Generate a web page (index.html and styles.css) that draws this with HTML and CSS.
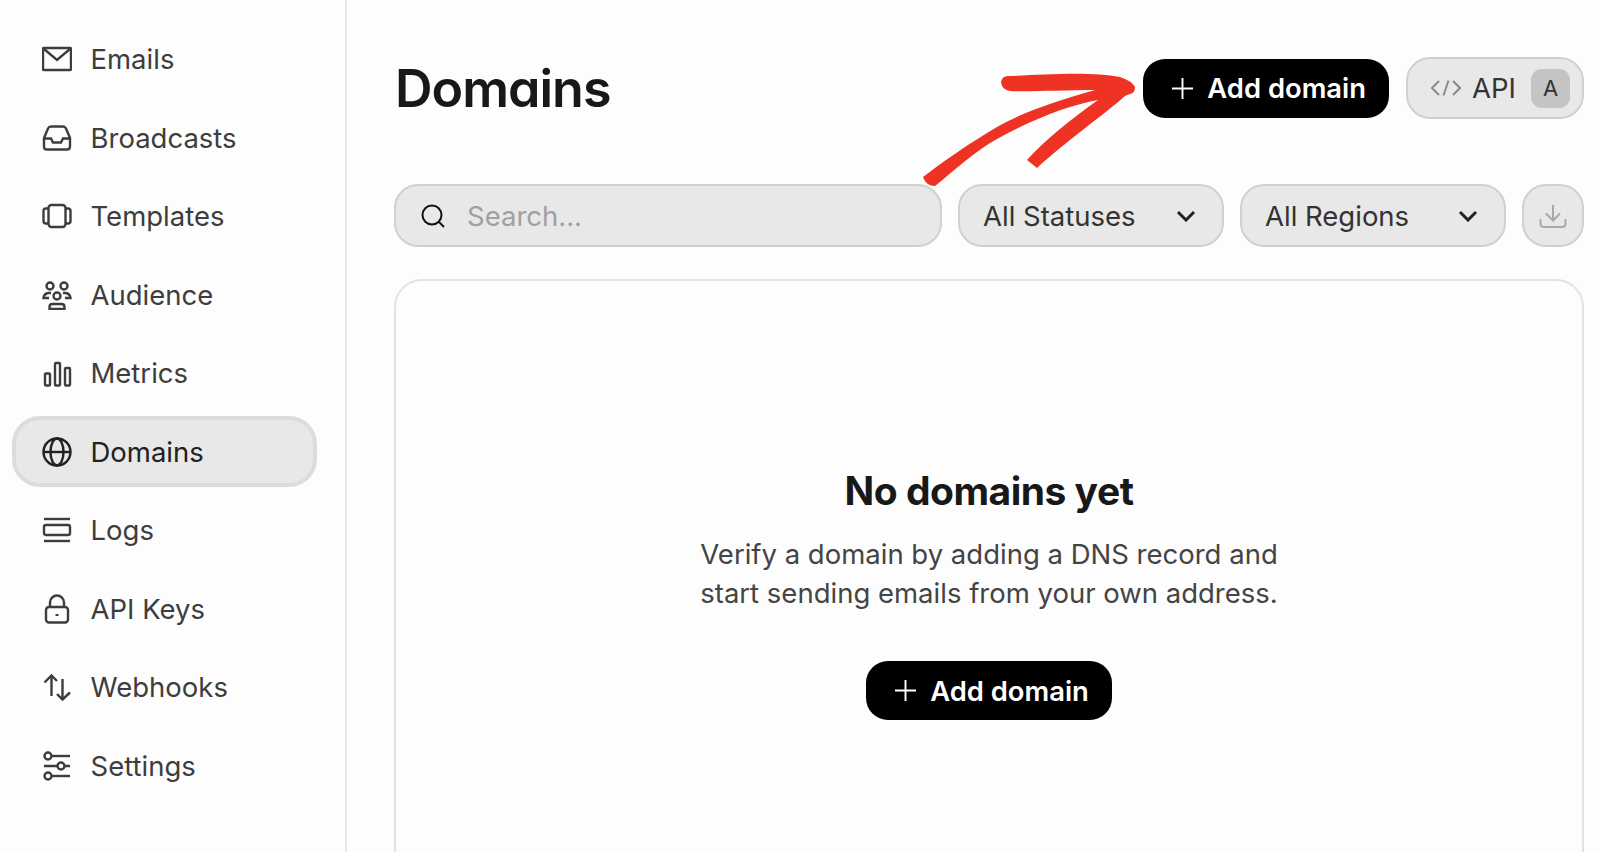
FILE: index.html
```html
<!DOCTYPE html>
<html lang="en">
  <head>
    <meta charset="UTF-8" />
    <title>Domains</title>
    <link rel="stylesheet" href="styles.css">
  </head>
  <body>
    <aside class="sidebar">
      <nav class="nav">
        <a class="nav-item" href="#emails">
          <svg class="nav-icon" viewBox="0 0 30 30"><rect x="1" y="4" width="28" height="22" rx="1"/><path d="M2 5l13 11L28 5"/></svg>
          Emails
        </a>
        <a class="nav-item" href="#broadcasts">
          <svg class="nav-icon" viewBox="0 0 30 30"><path d="M2 15L6 5.500Q7 3.500 9 3.500H21Q23 3.500 24 5.500L28 15V23.500Q28 26.500 25 26.500H5Q2 26.500 2 23.500Z"/><path d="M2 15.500H9L11 19.500H19L21 15.500H28"/></svg>
          Broadcasts
        </a>
        <a class="nav-item" href="#templates">
          <svg class="nav-icon" viewBox="0 0 30 30"><rect x="6.500" y="4" width="17" height="22" rx="3"/><path d="M6.500 7.500H4Q1.500 7.500 1.500 10V20Q1.500 22.500 4 22.500H6.500"/><path d="M23.500 7.500H26Q28.500 7.500 28.500 10V20Q28.500 22.500 26 22.500H23.500"/></svg>
          Templates
        </a>
        <a class="nav-item" href="#audience">
          <svg class="nav-icon" viewBox="0 0 30 30"><circle cx="8" cy="6" r="3.500"/><circle cx="22" cy="6" r="3.500"/><circle cx="15" cy="16" r="3.500"/><path d="M7.500 29V27Q7.500 24 10.500 24H19.500Q22.500 24 22.500 27V29Z"/><path d="M9 13H6.500Q2 13.500 1.500 18H7"/><path d="M21 13H23.500Q28 13.500 28.500 18H23"/></svg>
          Audience
        </a>
        <a class="nav-item" href="#metrics">
          <svg class="nav-icon" viewBox="0 0 30 30"><rect x="3" y="15.500" width="5" height="12" rx="1"/><rect x="13" y="5" width="5" height="22.500" rx="1"/><rect x="23" y="10" width="5" height="17.500" rx="1"/></svg>
          Metrics
        </a>
        <a class="nav-item nav-item-active" href="#domains">
          <svg class="nav-icon" viewBox="0 0 30 30"><circle cx="15" cy="15" r="13.500"/><ellipse cx="15" cy="15" rx="6.500" ry="13.500"/><path d="M1.500 15H28.500"/></svg>
          Domains
        </a>
        <a class="nav-item" href="#logs">
          <svg class="nav-icon" viewBox="0 0 30 30"><path d="M2 4H28"/><rect x="2" y="10" width="26" height="10" rx="2"/><path d="M2 26H28"/></svg>
          Logs
        </a>
        <a class="nav-item" href="#api-keys">
          <svg class="nav-icon" viewBox="0 0 30 30"><rect x="4" y="13" width="22" height="15.500" rx="3"/><path d="M8 13V8.500a7 7 0 0 1 14 0V13"/><path class="nav-icon-dot" d="M15 20v2"/></svg>
          API Keys
        </a>
        <a class="nav-item" href="#webhooks">
          <svg class="nav-icon" viewBox="0 0 30 30"><path d="M9.500 24V4M2.500 10.500L9.500 3.500L15 9"/><path d="M20.500 7V27M28 20.500L20.500 27.500L15 22"/></svg>
          Webhooks
        </a>
        <a class="nav-item" href="#settings">
          <svg class="nav-icon" viewBox="0 0 30 30"><circle cx="6" cy="5" r="3.500"/><path d="M10 5H28"/><path d="M2 15H15M23 15H28"/><circle cx="19" cy="15" r="3.500"/><circle cx="6" cy="25" r="3.500"/><path d="M10 25H28"/></svg>
          Settings
        </a>
      </nav>
    </aside>

    <main class="main">
      <header class="page-head">
        <h1 class="page-title">Domains</h1>
        <div class="page-actions">
          <button class="btn-primary">
            <svg class="plus-icon" viewBox="0 0 24 24"><path d="M12 1V23M1 12H23"/></svg>
            Add domain
          </button>
          <button class="btn-api">
            <svg class="code-icon" viewBox="0 0 30 16"><path d="M8 1L1 8L8 15"/><path d="M22 1L29 8L22 15"/><path d="M17.500 0.500L12.500 15.500"/></svg>
            API
            <span class="kbd">A</span>
          </button>
        </div>
      </header>

      <div class="filters">
        <label class="search">
          <svg class="search-icon" viewBox="0 0 24 24"><circle cx="11" cy="11" r="9.500"/><path d="M18 18L23 23"/></svg>
          <span class="search-text">Search...</span>
        </label>
        <div class="select">All Statuses
          <svg class="chevron" viewBox="0 0 20 12"><path d="M2 2L10 10L18 2"/></svg>
        </div>
        <div class="select">All Regions
          <svg class="chevron" viewBox="0 0 20 12"><path d="M2 2L10 10L18 2"/></svg>
        </div>
        <button class="btn-download">
          <svg class="download-icon" viewBox="0 0 28 24"><path d="M14 1V16M7 9.500L14 16.500L21 9.500"/><path d="M1.500 15V19.500Q1.500 23 5 23H23Q26.500 23 26.500 19.500V15"/></svg>
        </button>
      </div>

      <section class="empty-card">
        <h2 class="empty-title">No domains yet</h2>
        <p class="empty-text">Verify a domain by adding a DNS record and<br>start sending emails from your own address.</p>
        <button class="btn-primary">
          <svg class="plus-icon" viewBox="0 0 24 24"><path d="M12 1V23M1 12H23"/></svg>
          Add domain
        </button>
      </section>
    </main>

    <!-- hand drawn annotation on top of the screenshot -->
    <svg class="arrow" viewBox="0 0 1600 852">
      <path d="M1001 82Q1002 76 1008 76C1040 75 1090 71 1120 77Q1132 81 1135 87Q1135 93 1130 94L1125 96C1105 114 1065 142 1037 168L1027 160C1045 140 1070 120 1098 100C1070 105 1035 118 997 139C975 151 955 170 935 186Q926 186 923 177C945 160 970 143 997 127C1025 111 1060 100 1095 90C1060 90 1030 92 1010 91Q1002 90 1001 82Z"/>
    </svg>
  </body>
</html>
```

FILE: styles.css
```css
* {
  box-sizing: border-box;
  margin: 0;
  padding: 0;
}

html,
body {
  height: 852px;
  overflow: hidden;
}

body {
  display: flex;
  font-family: Inter, "Liberation Sans", sans-serif;
  color: #333;
  background-color: #fdfdfd;
}

button {
  font-family: inherit;
  border: 0;
}

svg {
  fill: none;
  stroke: currentColor;
  flex-shrink: 0;
}

.sidebar {
  flex: 0 0 347px;
  height: 100%;
  border-right: 2px solid #e6e6e6;
}

.nav {
  display: flex;
  flex-direction: column;
  gap: 7.5px;
  padding: 23.5px 28px 0 12px;
}

.nav-item {
  display: flex;
  align-items: center;
  gap: 18.500px;
  height: 71px;
  padding-left: 30px;
  border: 4px solid transparent;
  border-left-width: 0;
  border-right-width: 0;
  border-radius: 28px;
  font-size: 27.500px;
  color: #3d3d3d;
  text-decoration: none;
}

.nav-item-active {
  border: 4px solid #dcdcdc;
  padding-left: 26px;
  color: #222;
  background-color: #e8e8e8;
}

.nav-icon {
  width: 30px;
  height: 30px;
  stroke-width: 2.400;
}

.nav-icon-dot {
  stroke-width: 3;
}

.main {
  flex: 1;
  min-width: 0;
  height: 100%;
  padding: 57px 16px 0 47px;
  overflow: hidden;
}

.page-head {
  display: flex;
  align-items: center;
  justify-content: space-between;
  height: 62px;
}

.page-title {
  margin-left: 1px;
  font-size: 52px;
  font-weight: 600;
  letter-spacing: -1px;
  color: #181818;
  font-feature-settings: "cv11";
}

.page-actions {
  display: flex;
  align-items: center;
  gap: 17px;
}

.btn-primary {
  display: flex;
  align-items: center;
  gap: 13px;
  height: 59px;
  padding: 0 23px 0 28px;
  border-radius: 22px;
  font-size: 27.400px;
  font-weight: 600;
  color: #fff;
  background-color: #000;
}

.plus-icon {
  width: 23px;
  height: 23px;
  stroke-width: 2;
}

.btn-api {
  display: flex;
  align-items: center;
  width: 178px;
  height: 62px;
  padding: 0 12px 0 23px;
  border: 2px solid #d0d0d0;
  border-radius: 24px;
  font-size: 27.500px;
  color: #333;
  background-color: #e8e8e8;
}

.code-icon {
  width: 30px;
  height: 16px;
  margin-right: 11px;
  stroke: #8a8a8a;
  stroke-width: 2;
}

.kbd {
  display: flex;
  align-items: center;
  justify-content: center;
  width: 39px;
  height: 39px;
  margin-left: auto;
  border-radius: 11px;
  font-size: 22px;
  background-color: #c4c4c4;
}

.filters {
  display: flex;
  gap: 16px;
  margin-top: 65px;
}

.search,
.select,
.btn-download {
  display: flex;
  align-items: center;
  height: 63px;
  border: 2px solid #d0d0d0;
  border-radius: 24px;
  background-color: #e8e8e8;
}

.search {
  flex: 0 0 548px;
  gap: 22px;
  padding-left: 25px;
  font-size: 27.500px;
}

.search-icon {
  width: 24px;
  height: 24px;
  color: #111;
  stroke-width: 2;
}

.search-text {
  color: #a0a0a0;
}

.select {
  flex: 0 0 266px;
  justify-content: space-between;
  padding: 0 26px 0 23px;
  font-size: 27.500px;
}

.chevron {
  width: 20px;
  height: 12px;
  color: #222;
  stroke-width: 3;
}

.btn-download {
  justify-content: center;
  flex: 0 0 62px;
}

.download-icon {
  width: 28px;
  height: 24px;
  color: #a8a8a8;
  stroke-width: 2;
}

.empty-card {
  display: flex;
  flex-direction: column;
  align-items: center;
  height: 640px;
  margin-top: 32px;
  padding-top: 186px;
  border: 2px solid #e3e3e3;
  border-radius: 28px;
  text-align: center;
}

.empty-title {
  font-size: 39px;
  font-weight: 700;
  letter-spacing: -0.5px;
  line-height: 48px;
  color: #181818;
}

.empty-text {
  margin: 20px 0 48px;
  font-size: 27.500px;
  line-height: 39px;
  color: #444;
}

.arrow {
  position: absolute;
  top: 0;
  left: 0;
  width: 1600px;
  height: 852px;
  stroke: none;
  fill: #ee3224;
}
```
